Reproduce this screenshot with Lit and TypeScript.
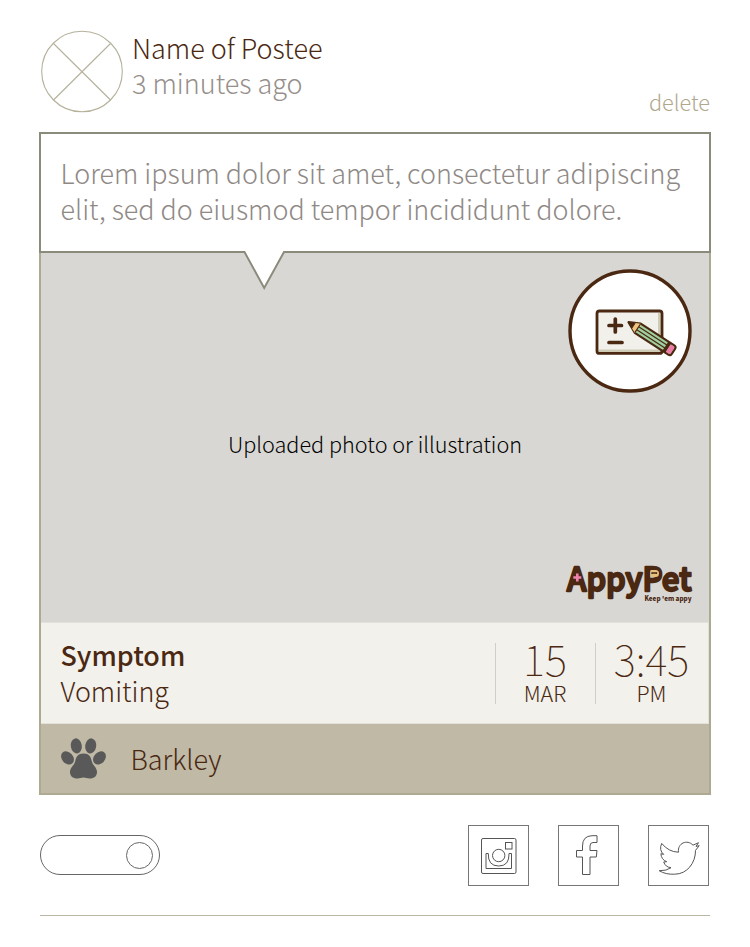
import { LitElement, html, css } from "lit";
import { customElement } from "lit/decorators.js";

@customElement("app-root")
export class AppRoot extends LitElement {
  static styles = css`
    :host {
      display: block;
      box-sizing: border-box;
      height: 947px;
      padding: 30px 39px 0;
      background: #fff;
      color: #4b2811;
      font-family: "Noto Sans CJK SC", "Noto Sans", sans-serif;
      font-weight: 300;
      font-size: 27px;
      line-height: 35px;
      overflow: hidden;
      white-space: nowrap;
    }
    * { box-sizing: border-box; }
    svg { display: block; overflow: visible; }
    .head { display: flex; height: 102px; }
    .avatar { width: 84px; height: 84px; margin-right: 9px; }
    .who { flex: 1; }
    .ago { color: #968f8b; }
    .delete { color: #b0a78c; font-size: 21.7px; margin: 54px 1px 0 0; }
    .card { width: 672px; height: 663px; border: 2px solid #aeaa92; }
    .bubble {
      position: relative;
      z-index: 1;
      height: 121px;
      margin: -2px -2px 0;
      padding: 21px 20px 0 19.5px;
      border: 2px solid #8b8b7c;
      background: #fff;
      color: #8f8986;
      font-size: 26.92px;
      line-height: 36px;
    }
    .tail { position: absolute; left: 200px; top: 117px; }
    .photo {
      position: relative;
      height: 369px;
      background: #d8d7d3;
      display: flex;
      align-items: center;
      justify-content: center;
      color: #000;
      font-size: 21.65px;
      padding-top: 12px;
    }
    .badge { position: absolute; right: 17px; top: 16px; }
    .logo { position: absolute; right: 14px; bottom: 15px; }
    .info {
      height: 102px;
      background: #f2f1eb;
      border: 1px solid #e3e2da;
      border-width: 1px 1px 1px 0;
      display: flex;
      padding: 15px 0 0 19.5px;
    }
    .symptom { flex: 1; margin-top: -1px; font-size: 26.9px; line-height: 35.5px; }
    .symptom b { font-weight: 500; }
    .cell {
      width: 100px;
      height: 61px;
      margin-top: 5px;
      border-left: 1px solid #d0cfc5;
      text-align: center;
      padding-right: 1px;
    }
    .cell.time { width: 113px; }
    .num { font-size: 42px; font-weight: 100; line-height: 36px; margin-top: -3px; }
    .unit { font-size: 21.5px; line-height: 30px; margin-top: 2px; }
    .pet {
      height: 69px;
      background: #bfb9a6;
      display: flex;
      align-items: center;
      padding-left: 20px;
    }
    .paw { margin-right: 24.5px; }
    .foot {
      display: flex;
      align-items: center;
      gap: 29px;
      height: 121px;
      margin-left: 1px;
      padding-right: 1px;
      border-bottom: 1px solid #bbb5a4;
      width: 670px;
    }
    .toggle {
      width: 120px;
      height: 40px;
      border: 1px solid #666;
      border-radius: 20px;
      display: flex;
      align-items: center;
      justify-content: flex-end;
      padding-right: 6px;
      margin-right: auto;
    }
    .knob { width: 27px; height: 27px; border: 1px solid #666; border-radius: 50%; }
    .share { width: 61px; height: 61px; border: 1px solid #777; }
  `;

  render() {
    return html`
      <div class="head">
        <svg class="avatar" viewBox="0 0 84 84" fill="none" stroke="#b5b19b" stroke-width="1.1">
          <circle cx="43" cy="41.5" r="40.3" />
          <path d="M14.5 13.5L71.5 70M71.5 13.5L14.5 70" />
        </svg>
        <div class="who">
          <div><span>Name of Postee</span></div>
          <div class="ago"><span>3 minutes ago</span></div>
        </div>
        <div class="delete">delete</div>
      </div>
      <div class="card">
        <div class="bubble">
          <div><span>Lorem ipsum dolor sit amet, consectetur adipiscing</span></div>
          <div><span>elit, sed do eiusmod tempor incididunt dolore.</span></div>
          <svg class="tail" width="44" height="40">
            <path d="M3.4 0V1L23 37.5L43 1V0Z" fill="#fff" />
            <path d="M1 1H3.5L23.2 37L43 1H44.5" fill="none" stroke="#8b8b7c" stroke-width="2" />
          </svg>
        </div>
        <div class="photo">
          <span>Uploaded photo or illustration</span>
          <svg class="badge" width="124" height="124" stroke="#4b2811" stroke-linejoin="round">
            <circle cx="62" cy="62" r="60" fill="#fff" stroke-width="3.4" />
            <rect x="29" y="42" width="65" height="42.4" rx="2.5" fill="#f1f0eb" stroke="none" />
            <path d="M91.2 44V81.7H31" fill="none" stroke="#cfccb5" stroke-width="2.4" />
            <rect x="29" y="42" width="65" height="42.4" rx="2.5" fill="none" stroke-width="2.8" />
            <path d="M41 56.500H53.5M47.3 50V63M41 73.500H54" stroke-width="3.7" stroke-linecap="round" />
            <g transform="translate(60.5 53.2) rotate(33)">
              <path d="M0 0L11 -5.5H51Q53.5 -5.5 53.5 -3V3Q53.5 5.5 51 5.5H11Z" fill="#9fd0a0" stroke-width="2.2" />
              <path d="M5 -2.7L11 -5.3L12.5 -2.5L11 0L12.5 2.5L11 5.3L5 2.7Z" fill="#efc483" stroke="none" />
              <path d="M0 0L6 -3V3Z" fill="#4b2811" stroke-width="1" />
              <path d="M11 -1.8H45M11 1.8H45M11 -5V5" stroke-width="1.2" fill="none" />
              <path d="M44 -5.5H47.5V5.5H44Z" fill="#4b2811" stroke="none" />
              <path d="M47.5 -4.4H51Q52.4 -4.4 52.4 -3V3Q52.4 4.4 51 4.4H47.5Z" fill="#ee7ba6" stroke="none" />
            </g>
          </svg>
          <svg class="logo" width="130" height="44" fill="#4b2811">
            <text x="2" y="27.500" font-size="33" font-weight="500" textLength="124.500" lengthAdjust="spacingAndGlyphs"
              stroke="#4b2811" stroke-width="2.3" stroke-linejoin="round">AppyPet</text>
            <path d="M10 14L12.500 9L15.500 14L17 21H9Z" />
            <path d="M12.3 10.5V18.5M8.300 14.5H16.300" stroke="#f083ae" stroke-width="2.6" />
            <path d="M85.500 7H90.500Q94 7 94 10.500Q94 14 90.500 14H85.500Z" fill="#e6c27f" />
            <path d="M87 11V10H91.500V11" fill="none" stroke="#4b2811" stroke-width="1.3" />
            <text x="79.500" y="37.500" font-size="6.8" font-weight="900" textLength="47" lengthAdjust="spacingAndGlyphs">Keep 'em appy</text>
          </svg>
        </div>
        <div class="info">
          <div class="symptom">
            <div><b>Symptom</b></div>
            <div><span>Vomiting</span></div>
          </div>
          <div class="cell"><div class="num">15</div><div class="unit">MAR</div></div>
          <div class="cell time"><div class="num">3:45</div><div class="unit">PM</div></div>
        </div>
        <div class="pet">
          <svg class="paw" width="45" height="41" fill="#595959">
            <ellipse cx="15.3" cy="7.9" rx="5.5" ry="7.6" transform="rotate(-9 15.3 7.9)" />
            <ellipse cx="29.7" cy="7.9" rx="5.5" ry="7.6" transform="rotate(9 29.7 7.9)" />
            <ellipse cx="6.5" cy="19.9" rx="5.6" ry="7.3" transform="rotate(-42 6.5 19.9)" />
            <ellipse cx="38.5" cy="19.9" rx="5.6" ry="7.3" transform="rotate(42 38.5 19.9)" />
            <path d="M22.5 15.5C28 15.5 30 19 30.7 23C31.3 27 36.3 29.5 36 34.5C35.7 39 32 40.5 28.5 40.5C26 40.5 25 39.5 22.5 39.5C20 39.5 19 40.5 16.5 40.5C13 40.5 9.3 39 9 34.5C8.7 29.5 13.7 27 14.3 23C15 19 17 15.5 22.5 15.5Z" />
          </svg>
          <span>Barkley</span>
        </div>
      </div>
      <div class="foot">
        <div class="toggle"><div class="knob"></div></div>
        <div class="share">
          <svg width="59" height="59" fill="none" stroke="#555">
            <rect x="12.5" y="12.5" width="34.5" height="35" rx="1.5" />
            <rect x="36.5" y="16.500" width="6.5" height="6.5" />
            <circle cx="29.7" cy="29.5" r="6.2" />
            <path d="M17 27.5H19.3Q18.8 40 29.7 40Q40.5 40 40 27.5H42.5V42.5H17Z" />
          </svg>
        </div>
        <div class="share">
          <svg width="59" height="59" fill="none" stroke="#555">
            <path d="M23.5 48.5V31H17.5V24.5H23.5V20Q23.5 10 33 9.7H38V16.5H34Q31 16.5 31 20V24.5H38L37.3 31H31V48.5Z" />
          </svg>
        </div>
        <div class="share">
          <svg width="59" height="59" fill="none" stroke="#555" stroke-linejoin="round">
            <path transform="translate(0.7 -0.3)" d="M12 17.7Q19 26.3 28.8 26.5C27.5 17.5 37.5 13.2 43.3 19.5L48.8 17L46.3 20.7L49.5 20L45.8 24.7C46 37 37.5 48.5 25 48.5Q16 49 9.5 45Q17 45.3 21.3 42Q15.8 41.5 14 36.3L17 36Q11.5 34 11.2 28L14 28.7Q9 24.5 12 17.7Z" />
          </svg>
        </div>
      </div>
    `;
  }
}
